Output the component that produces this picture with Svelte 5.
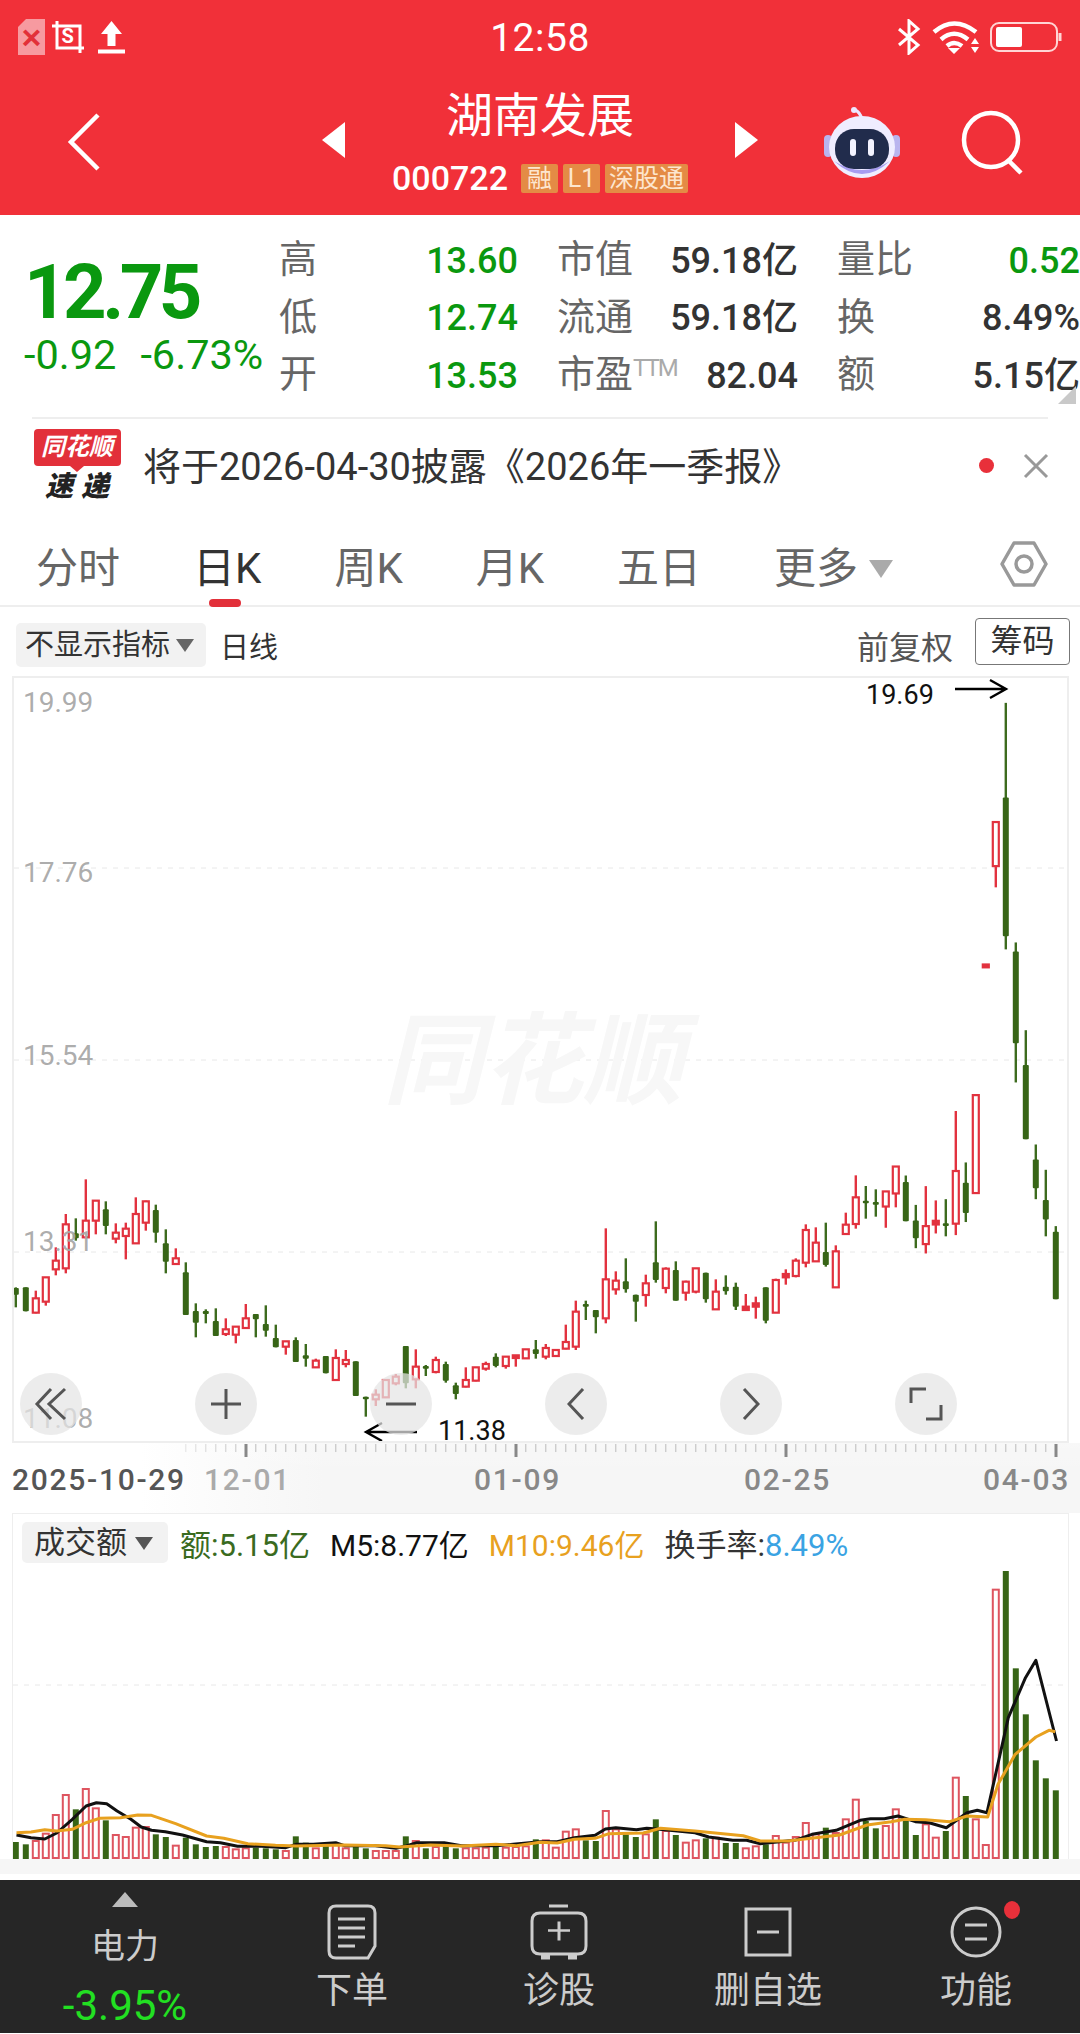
<script>
  // candle rows are [up, high, top, bottom, low], read off the chart
  const leftRows = [
    [0,472,474,494,532],[0,472,472,544,544],[1,482,505,548,550],[1,442,442,515,527],[1,352,392,418,436],
    [1,252,283,415,430],[0,265,310,325,332],[1,148,272,322,325],[1,212,212,272,313],[0,214,238,288,313],
    [1,280,308,326,340],[1,278,296,318,388],[1,202,252,340,340],[1,212,214,278,302],[0,224,240,308,338],
    [0,298,340,395,430],[1,355,385,402,404],[0,397,427,555,555],[0,520,543,578,622],[0,538,543,552,580],
    [0,535,573,618,618],[1,565,598,612,618],[1,590,590,614,640],[1,522,565,594,594],[0,552,552,568,622],
    [0,526,582,602,620],[0,584,624,652,652],[1,634,634,650,674],[0,622,630,696,696],[0,642,676,686,710],
    [1,686,692,712,712],[0,678,678,730,730],[1,658,684,750,750],[1,660,690,702,712],[0,694,694,798,798],
    [0,800,800,808,860],[1,778,794,808,828],[1,750,750,802,802],[1,732,740,760,766],[0,648,648,760,775],
    [1,658,710,748,775],[0,705,708,716,738],[1,680,690,726,730],[0,695,702,752,758],[0,758,766,792,808],
    [1,712,750,770,772],[1,712,712,752,754],[1,695,702,716,722],[0,670,680,708,712],[1,678,680,708,716],
    [1,676,676,684,710],[1,658,658,685,687],[0,630,658,672,686],
    [1,642,654,680,688],[1,660,660,678,678],[1,584,636,656,658],[1,512,545,650,660],[0,512,522,530,570],
    [0,540,540,562,610],[1,295,448,565,580],[1,424,452,478,494],[0,385,454,478,488],[0,494,494,515,575],
    [1,434,460,495,530],[0,274,397,450,458],[1,412,416,474,490],[0,394,420,512,512],[1,452,455,488,512],
    [1,415,415,485,490],[0,428,428,508,518],[1,448,485,538,540],[0,436,470,484,494],[0,458,470,530,540],
    [1,492,530,540,542],[1,500,520,530,566],[0,472,472,572,580],[1,446,450,548,548],[1,418,432,442,464],
    [1,385,392,438,442],[1,283,300,398,412],[1,292,338,394,394],[0,278,366,405,410],[1,346,364,472,472],
    [1,248,284,312,312],[1,136,202,282,296],[0,168,212,220,266],[0,178,216,224,260],
  ];
  const rightRows = [
    [1,1253,1253,1290,1342],[1,1192,1192,1258,1292],[0,1214,1230,1326,1326],[0,1286,1324,1368,1392],
    [1,1240,1338,1382,1405],[1,1275,1325,1334,1356],[0,1272,1331,1338,1363],[1,1056,1203,1332,1360],
    [0,1182,1232,1306,1328],[1,1017,1017,1257,1257],[1,697,697,704,704],[1,348,348,456,508],
    [0,56,288,628,660],[0,643,665,890,986],[0,858,943,1125,1125],[0,1138,1175,1245,1272],
    [0,1200,1274,1322,1363],[0,1338,1352,1517,1517],
  ];
  const near = (v) => 1130 + v / 3;
  const far = (v) => 680 + v / 2.45;
  const candles = [
    ...leftRows.map((r) => ({ up: r[0], hi: near(r[1]), top: near(r[2]), bot: near(r[3]), lo: near(r[4]) })),
    ...rightRows.map((r) => ({ up: r[0], hi: far(r[1]), top: far(r[2]), bot: far(r[3]), lo: far(r[4]) })),
  ].map((c, i) => ({ ...c, x: 15.8 + i * 10 }));

  const volTops = [
    1023,1030,1020,998,942,882,925,864,922,958,1002,1008,980,978,1000,1008,1034,1010,1030,1038,1035,
    1038,1045,1042,1040,1042,1045,1050,1006,1025,1042,1035,1030,1042,1038,1042,1050,1050,1050,1006,
    1020,1042,1038,1036,1042,1042,1042,1040,1036,1040,1038,1036,1015,
    1018,1040,992,985,1018,1020,930,985,1000,1008,1000,955,990,1002,1025,1018,1012,1010,1026,1026,
    1042,1036,1030,1005,1025,1008,966,1000,980,996,955,896,960,982,975,925,960,1002,970,1010,990,
    830,885,955,1032,266,208,502,640,778,832,868,
  ];
  const volY = (v) => 1500 + v / 3;
  const bars = volTops.map((v, i) => ({ x: 15.8 + i * 10, y: volY(v), up: candles[i].up }));

  const lineA = (p) => p.map(([x, y]) => `${(x / 2.904).toFixed(1)},${volY(y).toFixed(1)}`);
  const lineB = (p) => p.map(([x, y]) => `${(540 + x / 2.904).toFixed(1)},${volY(y).toFixed(1)}`);
  const m5 = [
    ...lineA([[48,1002],[90,1010],[130,1014],[165,996],[210,955],[250,915],[280,905],[310,908],[340,930],[380,955],[410,978],[440,988],[480,992],[530,1002],[600,1022],[640,1025],[690,1036],[760,1036],[830,1040],[860,1030],[910,1030],[975,1025],[1000,1034],[1090,1034],[1150,1042],[1180,1035],[1210,1025],[1290,1025],[1340,1034],[1440,1034],[1490,1030],[1568,1022]]),
    ...lineB([[50,1022],[100,1010],[160,1003],[190,984],[220,980],[280,986],[310,982],[340,984],[450,995],[490,1008],[560,1018],[600,1018],[640,1028],[740,1018],[790,1000],[860,988],[930,958],[960,953],[1000,953],[1040,945],[1090,962],[1130,965],[1180,980],[1240,935],[1270,928],[1298,935],[1360,650],[1410,530],[1440,478],[1500,720]]),
  ].join(" ");
  const m10 = [
    ...lineA([[48,995],[90,993],[130,986],[165,990],[210,985],[250,965],[290,952],[350,950],[400,942],[440,943],[510,968],[600,1005],[650,1012],[720,1028],[800,1033],[860,1035],[1000,1032],[1120,1034],[1160,1038],[1250,1032],[1340,1035],[1440,1030],[1500,1034],[1568,1024]]),
    ...lineB([[50,1026],[100,1015],[160,1012],[200,998],[300,996],[350,982],[450,990],[590,1004],[640,1020],[720,1020],[800,1010],[870,1002],[950,972],[1020,962],[1060,955],[1120,956],[1190,962],[1240,945],[1300,948],[1330,850],[1380,760],[1440,708],[1478,688],[1496,692]]),
  ].join(" ");

  const grid = [868, 1060, 1252];
  const priceLabels = [["19.99", 712], ["17.76", 882], ["15.54", 1065], ["13.31", 1251], ["11.08", 1428]];
  const ticks = Array.from({ length: 88 }, (_, i) => 186 + i * 10 - 0.2);
  const dates = [["12-01", 204, "#aaa"], ["01-09", 474, "#888"], ["02-25", 744, "#888"], ["04-03", 983, "#888"]];
  const quoteRows = [
    { a: "高", av: "13.60", b: "市值", bv: "59.18亿", c: "量比", cv: "0.52", cGreen: true },
    { a: "低", av: "12.74", b: "流通", bv: "59.18亿", c: "换", cv: "8.49%" },
    { a: "开", av: "13.53", b: "市盈", ttm: true, bv: "82.04", c: "额", cv: "5.15亿" },
  ];
  const tabs = ["分时", "日K", "周K", "月K", "五日"];
</script>

<div class="page">
  <header class="top">
    <div class="status">
      <div class="status-left">
        <span class="x-box">×</span>
        <svg width="32" height="32" viewBox="0 0 32 32" fill="none" stroke="#fff" stroke-width="3"><path d="M0 5H28V32M5 0V27H32"/><text x="9.5" y="22" font-size="20" font-weight="700" font-family="Roboto" fill="#fff" stroke="none">S</text></svg>
        <svg width="27" height="33" viewBox="0 0 27 33" fill="#fff"><path d="M13.5 0L24 13H17.5V25H9.5V13H3Z"/><rect y="28.5" width="27" height="4"/></svg>
      </div>
      <span class="time">12:58</span>
      <div class="status-right">
        <svg width="24" height="36" viewBox="0 0 24 36" fill="none" stroke="#fff" stroke-width="3"><path d="M2 10L21 26L12 34V2L21 10L2 26"/></svg>
        <svg width="47" height="33" viewBox="0 0 47 33" fill="none" stroke="#fff" stroke-width="4.5"><path d="M2 11Q22-6 44 11M9 18.5Q22 7 36 18.5M15 25Q22 19 30 25"/><path d="M22 33l-6-6h12zM43 17l-4 6h8zM39 26h8l-4 6z" fill="#fff" stroke="none"/></svg>
        <svg width="72" height="30" viewBox="0 0 72 30" fill="none"><rect x="1" y="1" width="66" height="28" rx="8" stroke="#ffd5d5" stroke-width="2"/><rect x="6" y="5" width="26" height="20" rx="2" fill="#fff"/><path d="M70 11v8" stroke="#ffd5d5" stroke-width="3"/></svg>
      </div>
    </div>
    <div class="nav">
      <svg class="back" width="34" height="58" viewBox="0 0 34 58" fill="none" stroke="#fff" stroke-width="4.5"><path d="M31 2L4 29L31 56"/></svg>
      <div class="stock">
        <span class="arrow left"></span>
        <div class="stock-text">
          <h1>湖南发展</h1>
          <div class="code">
            <span class="num">000722</span>
            <span class="tag">融</span><span class="tag">L1</span><span class="tag">深股通</span>
          </div>
        </div>
        <span class="arrow right"></span>
      </div>
      <div class="actions">
        <svg width="76" height="72" viewBox="0 0 76 72">
          <path d="M38 12C36 6 34 4 31 3" stroke="#ece6ff" stroke-width="3" fill="none"/>
          <circle cx="30" cy="3" r="3" fill="#ece6ff"/>
          <rect x="0" y="28" width="8" height="22" rx="4" fill="#b9b4ee"/>
          <rect x="68" y="28" width="8" height="22" rx="4" fill="#b9b4ee"/>
          <ellipse cx="38" cy="40" rx="33" ry="31" fill="#efedff"/>
          <path d="M10 54Q38 80 66 54Q38 72 10 54Z" fill="#a79cf0"/>
          <rect x="11" y="22" width="54" height="40" rx="19" fill="#212c4c"/>
          <rect x="26" y="32" width="6" height="17" rx="3" fill="#f3f3ff"/>
          <rect x="44" y="32" width="6" height="17" rx="3" fill="#f3f3ff"/>
        </svg>
        <svg width="66" height="66" viewBox="0 0 66 66" fill="none" stroke="#fff" stroke-width="4.5"><circle cx="31" cy="30" r="27"/><path d="M48 50L61 63"/></svg>
      </div>
    </div>
  </header>

  <section class="quote">
    <div class="price">
      <div class="last">12.75</div>
      <div class="delta"><span>-0.92</span><span>-6.73%</span></div>
    </div>
    <div class="rows">
      {#each quoteRows as r}
        <div class="row">
          <span class="lab">{r.a}</span>
          <span class="val green">{r.av}</span>
          <span class="lab gapped">{r.b}{#if r.ttm}<small>TTM</small>{/if}</span>
          <span class="val">{r.bv}</span>
          <span class="lab gapped">{r.c}</span>
          <span class="val" class:green={r.cGreen}>{r.cv}</span>
        </div>
      {/each}
    </div>
    <span class="corner"></span>
  </section>

  <section class="notice">
    <div class="logo">
      <span class="logo-top">同花顺</span>
      <span class="logo-bottom">速递</span>
    </div>
    <p>将于2026-04-30披露《2026年一季报》</p>
    <span class="dot"></span>
    <svg width="26" height="26" viewBox="0 0 26 26" stroke="#999" stroke-width="3"><path d="M2 2L24 24M24 2L2 24"/></svg>
  </section>

  <nav class="tabs">
    {#each tabs as t, i}
      <span class="tab" class:active={i === 1}>{t}</span>
    {/each}
    <span class="tab more">更多<i></i></span>
    <svg class="hex" width="48" height="48" viewBox="0 0 48 48" fill="none" stroke="#999" stroke-width="3.5"><path d="M14 3H34L46 24L34 45H14L2 24Z" stroke-linejoin="round"/><circle cx="24" cy="24" r="8"/></svg>
  </nav>

  <div class="controls">
    <span class="chip">不显示指标<i></i></span>
    <span class="kind">日线</span>
    <span class="adjust">前复权</span>
    <span class="chips-btn">筹码</span>
  </div>

  <div class="chart">
    <svg width="1053" height="763" viewBox="14 678 1053 763">
      {#each grid as y}
        <line x1="14" x2="1067" y1={y} y2={y} stroke="#e8e8e8" stroke-dasharray="5 6" />
      {/each}
      <text x="383" y="1096" class="mark">同花顺</text>
      {#each candles as c}
        <line x1={c.x} x2={c.x} y1={c.hi} y2={c.lo} stroke={c.up ? "#e2323f" : "#3d6b1e"} stroke-width="2.4" />
        {#if c.up}
          <rect x={c.x - 3} y={c.top} width="6" height={Math.max(c.bot - c.top, 1)} fill={c.bot - c.top < 4 ? "#e2323f" : "#fff"} stroke="#e2323f" stroke-width="2.2" />
        {:else}
          <rect x={c.x - 3} y={c.top} width="6" height={c.bot - c.top} rx="1" fill="#376516" />
        {/if}
      {/each}
      {#each priceLabels as [t, y]}
        <text x="23" {y} class="plabel">{t}</text>
      {/each}
      <text x="866" y="704" class="note">19.69</text>
      <path d="M955 689H1005M990 680L1006 689L990 698" fill="none" stroke="#000" stroke-width="2.4" />
      <text x="438" y="1440" class="note">11.38</text>
      <path d="M417 1432H367M382 1423L366 1432L382 1441" fill="none" stroke="#000" stroke-width="2.4" />
    </svg>
    <div class="zoom-btns">
      <button aria-label="最左"><svg width="34" height="34" viewBox="0 0 34 34" fill="none" stroke="#555" stroke-width="3"><path d="M17 2L3 17L17 32M31 2L15 17L31 32"/></svg></button>
      <button aria-label="放大"><svg width="30" height="30" viewBox="0 0 30 30" stroke="#555" stroke-width="3"><path d="M0 15H30M15 0V30"/></svg></button>
      <button aria-label="缩小"><svg width="30" height="30" viewBox="0 0 30 30" stroke="#555" stroke-width="3"><path d="M0 15H30"/></svg></button>
      <button aria-label="左移"><svg width="18" height="32" viewBox="0 0 18 32" fill="none" stroke="#555" stroke-width="3"><path d="M16 1L2 16L16 31"/></svg></button>
      <button aria-label="右移"><svg width="18" height="32" viewBox="0 0 18 32" fill="none" stroke="#555" stroke-width="3"><path d="M2 1L16 16L2 31"/></svg></button>
      <button aria-label="全屏"><svg width="34" height="34" viewBox="0 0 34 34" fill="none" stroke="#555" stroke-width="3"><path d="M17 2H2V16M17 32H32V18"/></svg></button>
    </div>
  </div>

  <svg class="axis" width="1080" height="70" viewBox="0 1443 1080 70">
    <defs>
      <linearGradient id="fade" x1="0" x2="1" y1="0" y2="0"><stop offset="0.13" stop-color="#fff" /><stop offset="0.3" stop-color="#f6f6f6" /><stop offset="1" stop-color="#f6f6f6" /></linearGradient>
      <linearGradient id="down" x1="0" x2="0" y1="0" y2="1"><stop offset="0" stop-color="#fff" stop-opacity="0.2" /><stop offset="0.45" stop-color="#fff" stop-opacity="0" /></linearGradient>
    </defs>
    <rect x="0" y="1443" width="1080" height="70" fill="url(#fade)" />
    <rect x="0" y="1443" width="1080" height="70" fill="url(#down)" />
    {#each ticks as x, i}
      <line x1={x} x2={x} y1="1444" y2="1452" stroke="#bbb" stroke-width="1" opacity={i < 8 ? 0.4 + i * 0.08 : 1} />
    {/each}
    {#each [246, 516, 786, 1056] as x}
      <line x1={x} x2={x} y1="1444" y2="1457" stroke="#888" stroke-width="3" />
    {/each}
    <text x="12" y="1490" class="date" fill="#555">2025-10-29</text>
    {#each dates as [t, x, fill]}
      <text {x} y="1490" class="date" {fill}>{t}</text>
    {/each}
  </svg>

  <div class="vol">
    <div class="vol-head">
      <span class="chip vol-chip">成交额<i></i></span>
      <span class="v-green">额:5.15亿</span>
      <span class="v-black">M5:8.77亿</span>
      <span class="v-orange">M10:9.46亿</span>
      <span class="v-dark">换手率:<b>8.49%</b></span>
    </div>
    <svg width="1055" height="288" viewBox="13 1570 1055 288">
      <line x1="13" x2="1068" y1="1684" y2="1684" stroke="#e8e8e8" stroke-dasharray="5 6" />
      {#each bars as b}
        {#if b.up}
          <rect x={b.x - 3} y={b.y} width="6" height={1857 - b.y} fill="#fff" stroke="#de5560" stroke-width="2" />
        {:else}
          <rect x={b.x - 3} y={b.y} width="6" height={1858 - b.y} fill="#376516" />
        {/if}
      {/each}
      <polyline points={m5} fill="none" stroke="#111" stroke-width="3" stroke-linejoin="round" />
      <polyline points={m10} fill="none" stroke="#e8a11f" stroke-width="3" stroke-linejoin="round" />
    </svg>
  </div>
  <div class="strip"></div>

  <footer class="bar">
    <div class="col first">
      <span class="up"></span>
      <span class="sector">电力</span>
      <span class="pct">-3.95%</span>
    </div>
    <div class="col">
      <svg width="50" height="56" viewBox="0 0 50 56" fill="none" stroke="#ccc" stroke-width="3"><path d="M9 2H41Q48 2 48 9V42L41 54H9Q2 54 2 47V9Q2 2 9 2Z"/><path d="M11 15H38M11 24H38M11 33H38M11 42H28"/></svg>
      <span>下单</span>
    </div>
    <div class="col">
      <svg width="58" height="56" viewBox="0 0 58 56" fill="none" stroke="#ccc" stroke-width="3"><path d="M19 2H38" /><path d="M10 9H48Q56 9 56 17V42Q56 50 48 50H10Q2 50 2 42V17Q2 9 10 9Z"/><path d="M18 25H40M29 15V36" transform="translate(0 4) scale(1 .9)"/><path d="M11 53H20M38 53H47" stroke-width="5"/></svg>
      <span>诊股</span>
    </div>
    <div class="col">
      <svg width="48" height="50" viewBox="0 0 48 50" fill="none" stroke="#ccc" stroke-width="3"><rect x="2" y="2" width="44" height="46"/><path d="M13 25H35"/></svg>
      <span>删自选</span>
    </div>
    <div class="col">
      <svg width="52" height="52" viewBox="0 0 52 52" fill="none" stroke="#ccc" stroke-width="3"><circle cx="26" cy="26" r="24"/><path d="M15 19H37M15 33H37"/></svg>
      <span>功能</span>
      <em class="badge"></em>
    </div>
  </footer>
</div>

<style>
  :global(body) {
    margin: 0;
    background: #fff;
  }
  .page {
    width: 1080px;
    height: 2034px;
    overflow: hidden;
    font-family: Roboto, "Noto Sans CJK SC", sans-serif;
    color: #333;
  }
  .top {
    height: 215px;
    background: #f13039;
    color: #fff;
  }
  .status {
    height: 74px;
    display: grid;
    grid-template-columns: 1fr auto 1fr;
    align-items: center;
    padding: 0 18px;
  }
  .status-left,
  .status-right {
    display: flex;
    align-items: center;
    gap: 7px;
  }
  .status-left svg:last-child {
    margin-left: 7px;
  }
  .status-right {
    justify-content: flex-end;
    gap: 11px;
  }
  .x-box {
    width: 27px;
    height: 36px;
    background: #f79aa0;
    clip-path: polygon(8px 0, 100% 0, 100% 100%, 0 100%, 0 8px);
    color: #e23039;
    font: 700 34px/37px "Liberation Sans", sans-serif;
    text-align: center;
  }
  .time {
    font-size: 39px;
    letter-spacing: 0.5px;
    margin-top: 2px;
  }
  .nav {
    height: 141px;
    display: grid;
    grid-template-columns: 1fr auto 1fr;
    align-items: center;
    padding: 0 54px;
  }
  .back {
    margin: -6px 0 0 13px;
  }
  .stock {
    display: flex;
    align-items: center;
    gap: 12px;
    margin-top: -8px;
  }
  .stock-text {
    display: flex;
    flex-direction: column;
    align-items: center;
    width: 366px;
  }
  .arrow {
    width: 0;
    height: 0;
    border-top: 18px solid transparent;
    border-bottom: 18px solid transparent;
    margin-top: -2px;
  }
  .arrow.left {
    border-right: 23px solid #fff;
  }
  .arrow.right {
    border-left: 23px solid #fff;
  }
  h1 {
    margin: 0;
    font-size: 47px;
    font-weight: 400;
    line-height: 60px;
  }
  .code {
    display: flex;
    align-items: center;
    gap: 5px;
    margin-top: 15px;
  }
  .num {
    font-size: 34px;
    font-weight: 500;
    line-height: 34px;
    margin-right: 8px;
  }
  .tag {
    flex: none;
    height: 29px;
    min-width: 37px;
    padding: 0 4px;
    box-sizing: border-box;
    background: #e48b45;
    border-radius: 2px;
    color: #fde6cf;
    font-size: 25px;
    line-height: 29px;
    text-align: center;
  }
  .actions {
    display: flex;
    justify-content: flex-end;
    align-items: center;
    gap: 60px;
    margin-top: -4px;
  }

  .quote {
    position: relative;
    height: 202px;
    display: flex;
    box-sizing: border-box;
  }
  .price {
    width: 279px;
    flex: none;
    padding: 39px 0 0 24px;
    box-sizing: border-box;
    color: #0a980f;
  }
  .last {
    font-size: 76px;
    font-weight: 700;
    line-height: 76px;
    letter-spacing: -4.5px;
  }
  .delta {
    display: flex;
    gap: 24px;
    font-size: 41.5px;
    line-height: 44px;
    margin-top: 3px;
    white-space: nowrap;
  }
  .rows {
    padding-top: 17px;
  }
  .row {
    height: 57.5px;
    display: grid;
    grid-template-columns: 60px 179px 130px 150px 130px 152px;
    align-items: center;
    width: 801px;
  }
  .gapped {
    padding-left: 39px;
    white-space: nowrap;
  }
  .lab {
    font-size: 38px;
    line-height: 50px;
    color: #666;
    margin-top: -3px;
  }
  .lab small {
    font-size: 24px;
    line-height: 0;
    color: #aaa;
    vertical-align: 11px;
    letter-spacing: -2px;
  }
  .val {
    font-size: 36px;
    line-height: 50px;
    text-align: right;
    font-weight: 500;
    color: #333;
    white-space: nowrap;
  }
  .val.green {
    color: #0a980f;
  }
  .corner {
    position: absolute;
    right: 4px;
    bottom: 13px;
    border-left: 18px solid transparent;
    border-bottom: 18px solid #c9c9c9;
  }

  .notice {
    height: 95px;
    margin: 0 32px;
    border-top: 2px solid #eee;
    display: flex;
    align-items: center;
    box-sizing: border-box;
  }
  .logo {
    width: 88px;
    margin-left: 1px;
    display: flex;
    flex-direction: column;
    align-items: center;
  }
  .logo-top {
    position: relative;
    width: 87px;
    height: 37px;
    background: #e2303a;
    border-radius: 4px;
    color: #fff;
    font-size: 24px;
    font-weight: 700;
    font-style: italic;
    line-height: 36px;
    text-align: center;
  }
  .logo-top::after {
    content: "";
    position: absolute;
    left: 36px;
    top: 37px;
    border-left: 7px solid transparent;
    border-right: 7px solid transparent;
    border-top: 6px solid #e2303a;
  }
  .logo-bottom {
    color: #222;
    font-size: 28px;
    font-weight: 900;
    font-style: italic;
    line-height: 30px;
    margin-top: 6px;
    letter-spacing: 8px;
    margin-right: -8px;
  }
  .notice p {
    flex: 1;
    margin: 0 0 4px 22px;
    font-size: 38px;
    color: #333;
    white-space: nowrap;
  }
  .dot {
    width: 15px;
    height: 15px;
    border-radius: 50%;
    background: #e8303a;
    margin-right: 29px;
  }
  .notice svg {
    margin-right: -1px;
  }

  .tabs {
    margin-top: 11px;
    height: 84px;
    border-bottom: 2px solid #eee;
    box-sizing: border-box;
    display: flex;
    align-items: center;
    gap: 73px;
    padding: 0 32px 0 36px;
  }
  .tab {
    position: relative;
    font-size: 42px;
    color: #666;
    white-space: nowrap;
  }
  .tab.active {
    color: #333;
  }
  .tab.active::after {
    content: "";
    position: absolute;
    left: 16px;
    bottom: -12px;
    width: 32px;
    height: 8px;
    border-radius: 4px;
    background: #e2303a;
  }
  .more i {
    display: inline-block;
    margin-left: 11px;
    vertical-align: 5px;
    border-left: 12px solid transparent;
    border-right: 12px solid transparent;
    border-top: 18px solid #aaa;
  }
  .hex {
    margin-left: auto;
  }

  .controls {
    height: 69px;
    display: flex;
    align-items: center;
    padding: 6px 10px 0 16px;
    box-sizing: border-box;
    font-size: 29px;
  }
  .chip {
    background: #f2f2f2;
    border-radius: 5px;
    height: 44px;
    line-height: 44px;
    padding: 0 12px 0 9px;
    color: #333;
    white-space: nowrap;
  }
  .chip i {
    display: inline-block;
    margin-left: 6px;
    vertical-align: 3px;
    border-left: 9px solid transparent;
    border-right: 9px solid transparent;
    border-top: 13px solid #666;
  }
  .kind {
    margin-left: 14px;
    color: #333;
  }
  .adjust {
    margin-left: auto;
    color: #555;
    font-size: 32px;
  }
  .chips-btn {
    margin-left: 22px;
    width: 95px;
    height: 47px;
    box-sizing: border-box;
    border: 1px solid #777;
    border-radius: 4px;
    line-height: 45px;
    text-align: center;
    font-size: 32px;
    color: #333;
    margin-top: -6px;
  }

  .chart {
    position: relative;
    margin-left: 12px;
    width: 1057px;
    height: 767px;
    box-sizing: border-box;
    border: 2px solid #eee;
  }
  .chart > svg {
    display: block;
  }
  .mark {
    font-size: 100px;
    font-weight: 700;
    font-style: italic;
    fill: #f7f7f7;
  }
  .plabel {
    font-size: 28px;
    fill: #a8a8a8;
    fill-opacity: 0.95;
  }
  .note {
    font-size: 27px;
    fill: #111;
  }
  .zoom-btns {
    position: absolute;
    left: 6px;
    top: 695px;
    display: flex;
    gap: 113px;
  }
  .zoom-btns button {
    width: 62px;
    height: 62px;
    padding: 0;
    border: 0;
    border-radius: 50%;
    background: rgba(229, 229, 229, 0.72);
    display: flex;
    align-items: center;
    justify-content: center;
  }

  .axis {
    display: block;
  }
  .date {
    font-size: 30px;
    font-weight: 500;
    letter-spacing: 1.7px;
  }

  .vol {
    margin-left: 12px;
    width: 1057px;
    height: 346px;
    box-sizing: border-box;
    border: 1px solid #eee;
    border-bottom: 0;
  }
  .vol > svg {
    display: block;
  }
  .vol-head {
    height: 57px;
    display: flex;
    align-items: center;
    font-size: 31px;
    padding: 0 0 0 9px;
    box-sizing: border-box;
    gap: 20px;
    white-space: nowrap;
  }
  .vol-chip {
    height: 41px;
    line-height: 41px;
    font-size: 31px;
    padding: 0 15px 0 12px;
    margin-right: -8px;
  }
  .vol-chip i {
    border-top-color: #555;
    margin-left: 8px;
  }
  .v-green {
    color: #3a6b1f;
  }
  .v-black {
    color: #111;
    font-size: 30px;
  }
  .v-orange {
    color: #e8a11f;
    font-size: 30px;
  }
  .v-dark {
    color: #333;
  }
  .v-dark b {
    font-weight: 400;
    color: #3aa3e3;
  }
  .strip {
    height: 21px;
    background: linear-gradient(#f6f6f6 70%, #fff 70%);
  }

  .bar {
    height: 153px;
    background: #262626;
    display: grid;
    grid-template-columns: 250px 204px 210px 208px 208px;
    color: #ccc;
    font-size: 36px;
  }
  .col {
    position: relative;
    display: flex;
    flex-direction: column;
    align-items: center;
    padding-top: 24px;
    gap: 9px;
    box-sizing: border-box;
    line-height: 44px;
  }
  .col svg {
    height: 56px;
  }
  .col.first {
    padding-top: 12px;
    gap: 0;
  }
  .up {
    border-left: 13px solid transparent;
    border-right: 13px solid transparent;
    border-bottom: 15px solid #bbb;
  }
  .sector {
    font-size: 34px;
    margin-top: 17px;
  }
  .pct {
    color: #22e022;
    font-size: 42px;
    margin-top: 16px;
  }
  .badge {
    position: absolute;
    right: 60px;
    top: 21px;
    width: 16px;
    height: 18px;
    border-radius: 50%;
    background: #e8303a;
  }
</style>
